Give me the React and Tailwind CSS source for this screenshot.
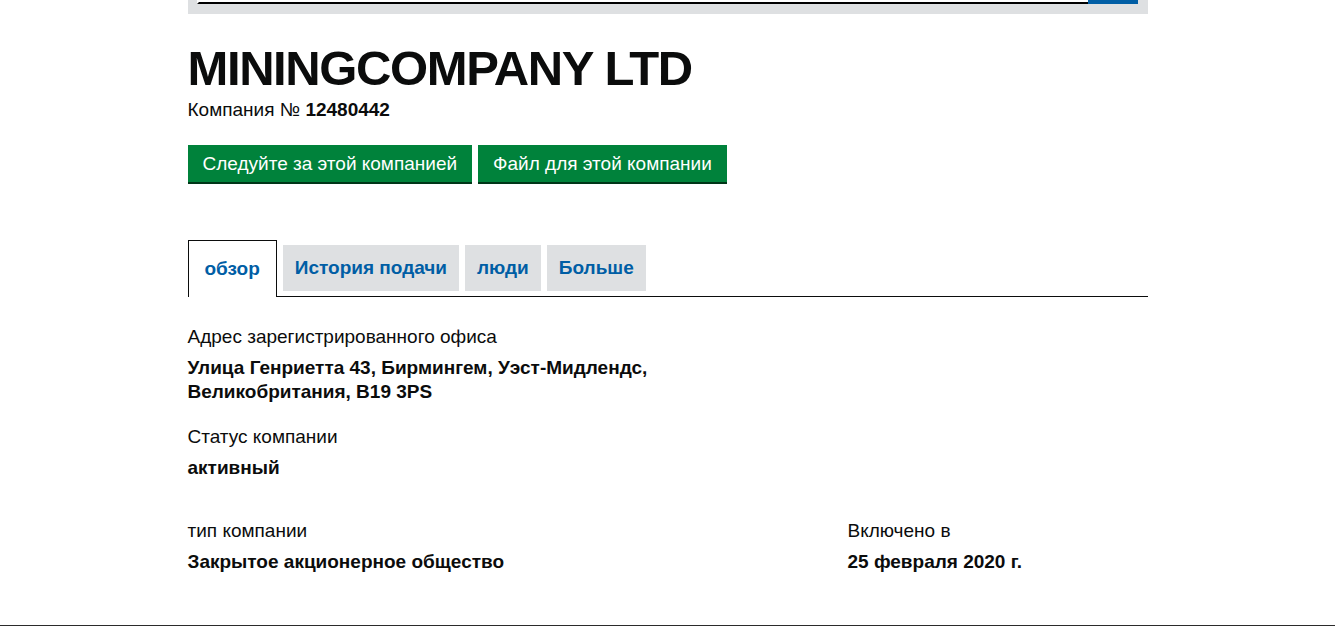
import React from "react";

const tabs = [
  { label: "обзор", active: true },
  { label: "История подачи" },
  { label: "люди" },
  { label: "Больше" },
];

function Field({ label, children, className = "" }) {
  return (
    <div className={className}>
      <dt className="leading-[24px]">{label}</dt>
      <dd className="mt-[7px] font-bold leading-[24px]">{children}</dd>
    </div>
  );
}

export default function App() {
  return (
    <div
      className="min-h-[626px] bg-white border-b border-[#2b2b2b] text-[19px] text-[#0b0c0c]"
      style={{ fontFamily: '"Liberation Sans", Arial, sans-serif' }}
    >
      <div className="w-[960px] mx-auto">
        {/* search strip, scrolled mostly off the top */}
        <div className="bg-[#dee0e2] h-[14px] pl-[9px] pr-[10px]">
          <div className="flex h-[4px]">
            <div className="flex-1 bg-white border-b-2 border-l-2 border-black border-l-white" />
            <div className="w-[50px] bg-[#005ea5]" />
          </div>
        </div>

        <h1 className="mt-[30px] text-[49px] leading-none font-bold tracking-[-1.4px]">
          MININGCOMPANY LTD
        </h1>
        <p className="mt-[5px] leading-[24px]">
          Компания № <strong>12480442</strong>
        </p>

        <div className="mt-[23px] flex gap-[6px]">
          <button className="bg-[#00823b] text-white px-[15px] h-[37px] leading-[19px] shadow-[0_2px_0_#003618]">
            Следуйте за этой компанией
          </button>
          <button className="bg-[#00823b] text-white px-[15px] h-[37px] leading-[19px] shadow-[0_2px_0_#003618]">
            Файл для этой компании
          </button>
        </div>

        <ul className="mt-[58px] flex gap-[6px] border-b border-[#0b0c0c]">
          {tabs.map((t) =>
            t.active ? (
              <li
                key={t.label}
                className="-mb-px bg-white border border-b-0 border-[#0b0c0c] px-[16px] h-[57px] flex items-center font-bold text-[#005ea5]"
              >
                {t.label}
              </li>
            ) : (
              <li
                key={t.label}
                className="my-[5px] bg-[#dee0e2] px-[12px] h-[46px] flex items-center font-bold text-[#005ea5]"
              >
                {t.label}
              </li>
            )
          )}
        </ul>

        <dl className="mt-[28px]">
          <Field label="Адрес зарегистрированного офиса">
            Улица Генриетта 43, Бирмингем, Уэст-Мидлендс,
            <br />
            Великобритания, B19 3PS
          </Field>
          <Field label="Статус компании" className="mt-[21px]">
            активный
          </Field>
          <div className="mt-[39px] grid grid-cols-[660px_1fr]">
            <Field label="тип компании">Закрытое акционерное общество</Field>
            <Field label="Включено в">25 февраля 2020 г.</Field>
          </div>
        </dl>
      </div>
    </div>
  );
}
